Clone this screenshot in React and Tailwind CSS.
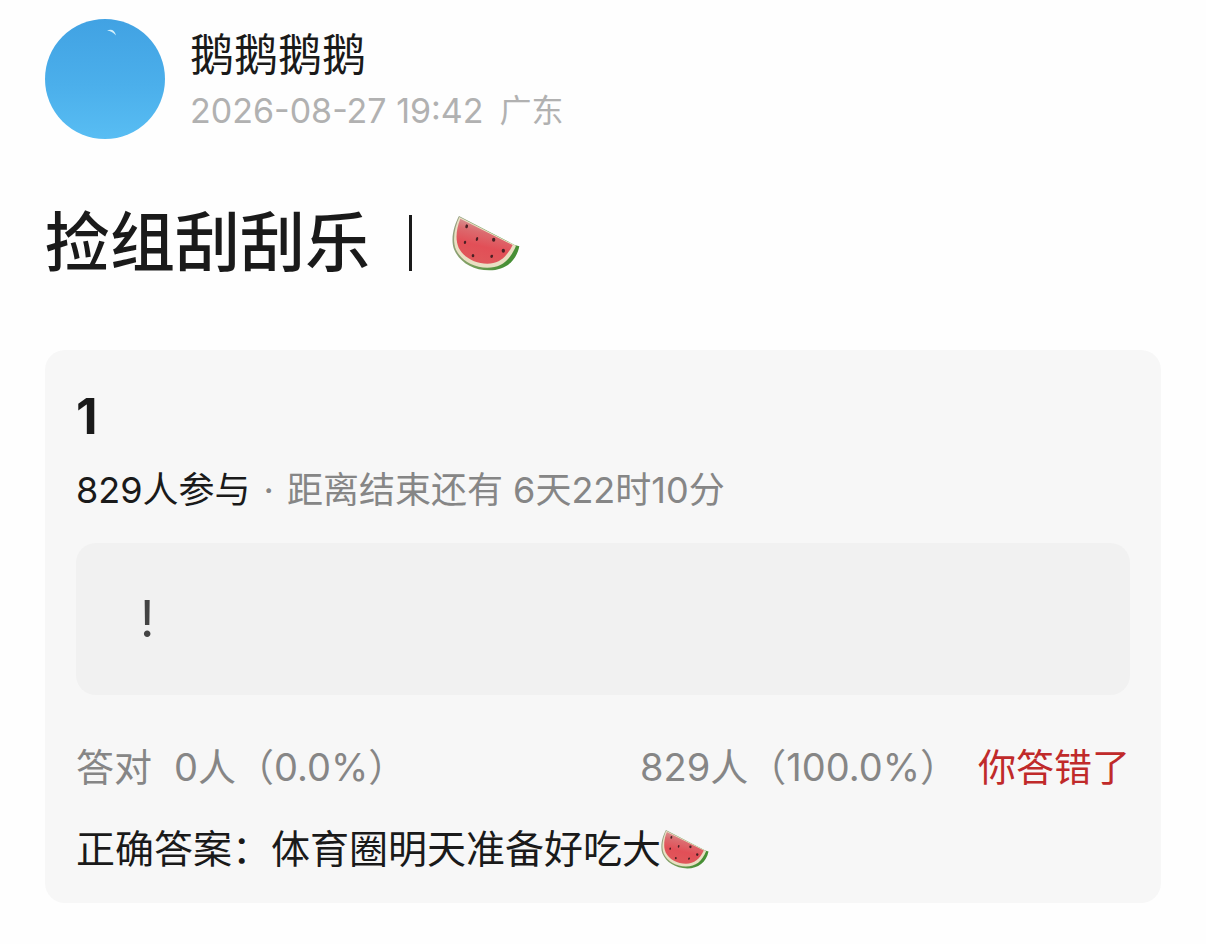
function Watermelon({ className }) {
  return (
    <svg viewBox="0 0 204 165" className={className} role="img" aria-label="西瓜">
      <defs>
        <linearGradient id="flesh" x1="0.62" y1="0.1" x2="0.38" y2="0.9">
          <stop offset="0" stopColor="#d79a98" />
          <stop offset="0.3" stopColor="#dc6a6e" />
          <stop offset="0.65" stopColor="#e24f57" />
          <stop offset="1" stopColor="#e0565a" />
        </linearGradient>
        <linearGradient id="rind" x1="0" y1="0" x2="1" y2="0.4">
          <stop offset="0" stopColor="#9aa087" />
          <stop offset="0.5" stopColor="#7fa062" />
          <stop offset="1" stopColor="#478f35" />
        </linearGradient>
      </defs>
      <path d="M21 0C8 24-6 66 6 100c15 36 54 63 106 63 46 0 80-25 90-72l-14-4z" fill="url(#rind)" />
      <path d="M22 3C8 34 0 72 12 101c16 33 52 54 94 54 42 0 68-22 86-66z" fill="#e9dfc3" />
      <path d="M25 8C13 37 9 70 20 95c15 30 50 48 86 48 36 0 58-20 76-56z" fill="url(#flesh)" />
      <g fill="#4a2024">
        <ellipse cx="44" cy="31" rx="4" ry="6" transform="rotate(15 44 31)" />
        <ellipse cx="75" cy="69" rx="3.5" ry="6" transform="rotate(15 75 69)" />
        <ellipse cx="125" cy="71" rx="5" ry="6" />
        <ellipse cx="39" cy="79" rx="3.5" ry="5" transform="rotate(15 39 79)" />
        <ellipse cx="154" cy="104" rx="5" ry="6" />
        <ellipse cx="63" cy="119" rx="4" ry="5" />
        <ellipse cx="119" cy="121" rx="4" ry="5" transform="rotate(25 119 121)" />
      </g>
    </svg>
  );
}

function Avatar() {
  return (
    <svg viewBox="0 0 120 120" className="size-30 shrink-0" role="img" aria-label="头像">
      <defs>
        <linearGradient id="sky" x1="0" y1="0" x2="0" y2="1">
          <stop offset="0" stopColor="#41a2e3" />
          <stop offset="0.55" stopColor="#4bafeb" />
          <stop offset="1" stopColor="#58bdf3" />
        </linearGradient>
      </defs>
      <circle cx="60" cy="60" r="60" fill="url(#sky)" />
      <path d="M62 11.500Q69 8.500 71 16.500Q67 12 62 11.500z" fill="#d5f0fb" />
    </svg>
  );
}

export default function App() {
  return (
    <main className="min-h-screen bg-[#fefefe] px-[45px] pt-[19px] pb-10 font-['Inter','Noto_Sans_CJK_SC',sans-serif] text-[#1a1a1a]">
      <header className="flex items-center gap-[25px]">
        <Avatar />
        <div className="pt-2">
          <p className="text-[44px] leading-14">鹅鹅鹅鹅</p>
          <p className="flex items-center gap-4 leading-14 text-[#b1b1b1]">
            <time dateTime="2026-08-27T19:42" className="text-[34px]">2026-08-27 19:42</time>
            <span className="text-[32px]">广东</span>
          </p>
        </div>
      </header>

      <h1 className="mt-14 flex h-24 items-center text-[65px] leading-24 font-medium">
        <span>捡组刮刮乐</span>
        <span className="ml-[39px] h-14 w-[3px] bg-[#1a1a1a]" />
        <Watermelon className="ml-10 h-[55px] w-[68px]" />
      </h1>

      <section className="mt-[59px] rounded-[20px] bg-[#f7f7f7] px-[31px] pt-9 pb-6">
        <h2 className="text-[50px] leading-[60px] font-bold">1</h2>
        <p className="mt-4 flex gap-[13px] text-[36px] leading-14">
          <span>829人参与</span>
          <span className="text-[#868686]">·</span>
          <span className="text-[#868686]">距离结束还有 6天22时10分</span>
        </p>
        <div className="mt-[25px] flex h-[152px] items-center rounded-[20px] bg-[#f1f1f1] px-16 text-[50px] text-[#444]">
          !
        </div>
        <div className="mt-11 flex items-center justify-between text-[38px] leading-14 text-[#868686]">
          <p className="flex gap-[22px]">
            <span>答对</span>
            <span>0人（0.0%）</span>
          </p>
          <p className="flex gap-5">
            <span>829人（100.0%）</span>
            <span className="text-[#c02a2a]">你答错了</span>
          </p>
        </div>
        <p className="mt-6 flex items-center text-[39px] leading-15">
          <span>正确答案：体育圈明天准备好吃大</span>
          <Watermelon className="h-[39px] w-12" />
        </p>
      </section>
    </main>
  );
}
